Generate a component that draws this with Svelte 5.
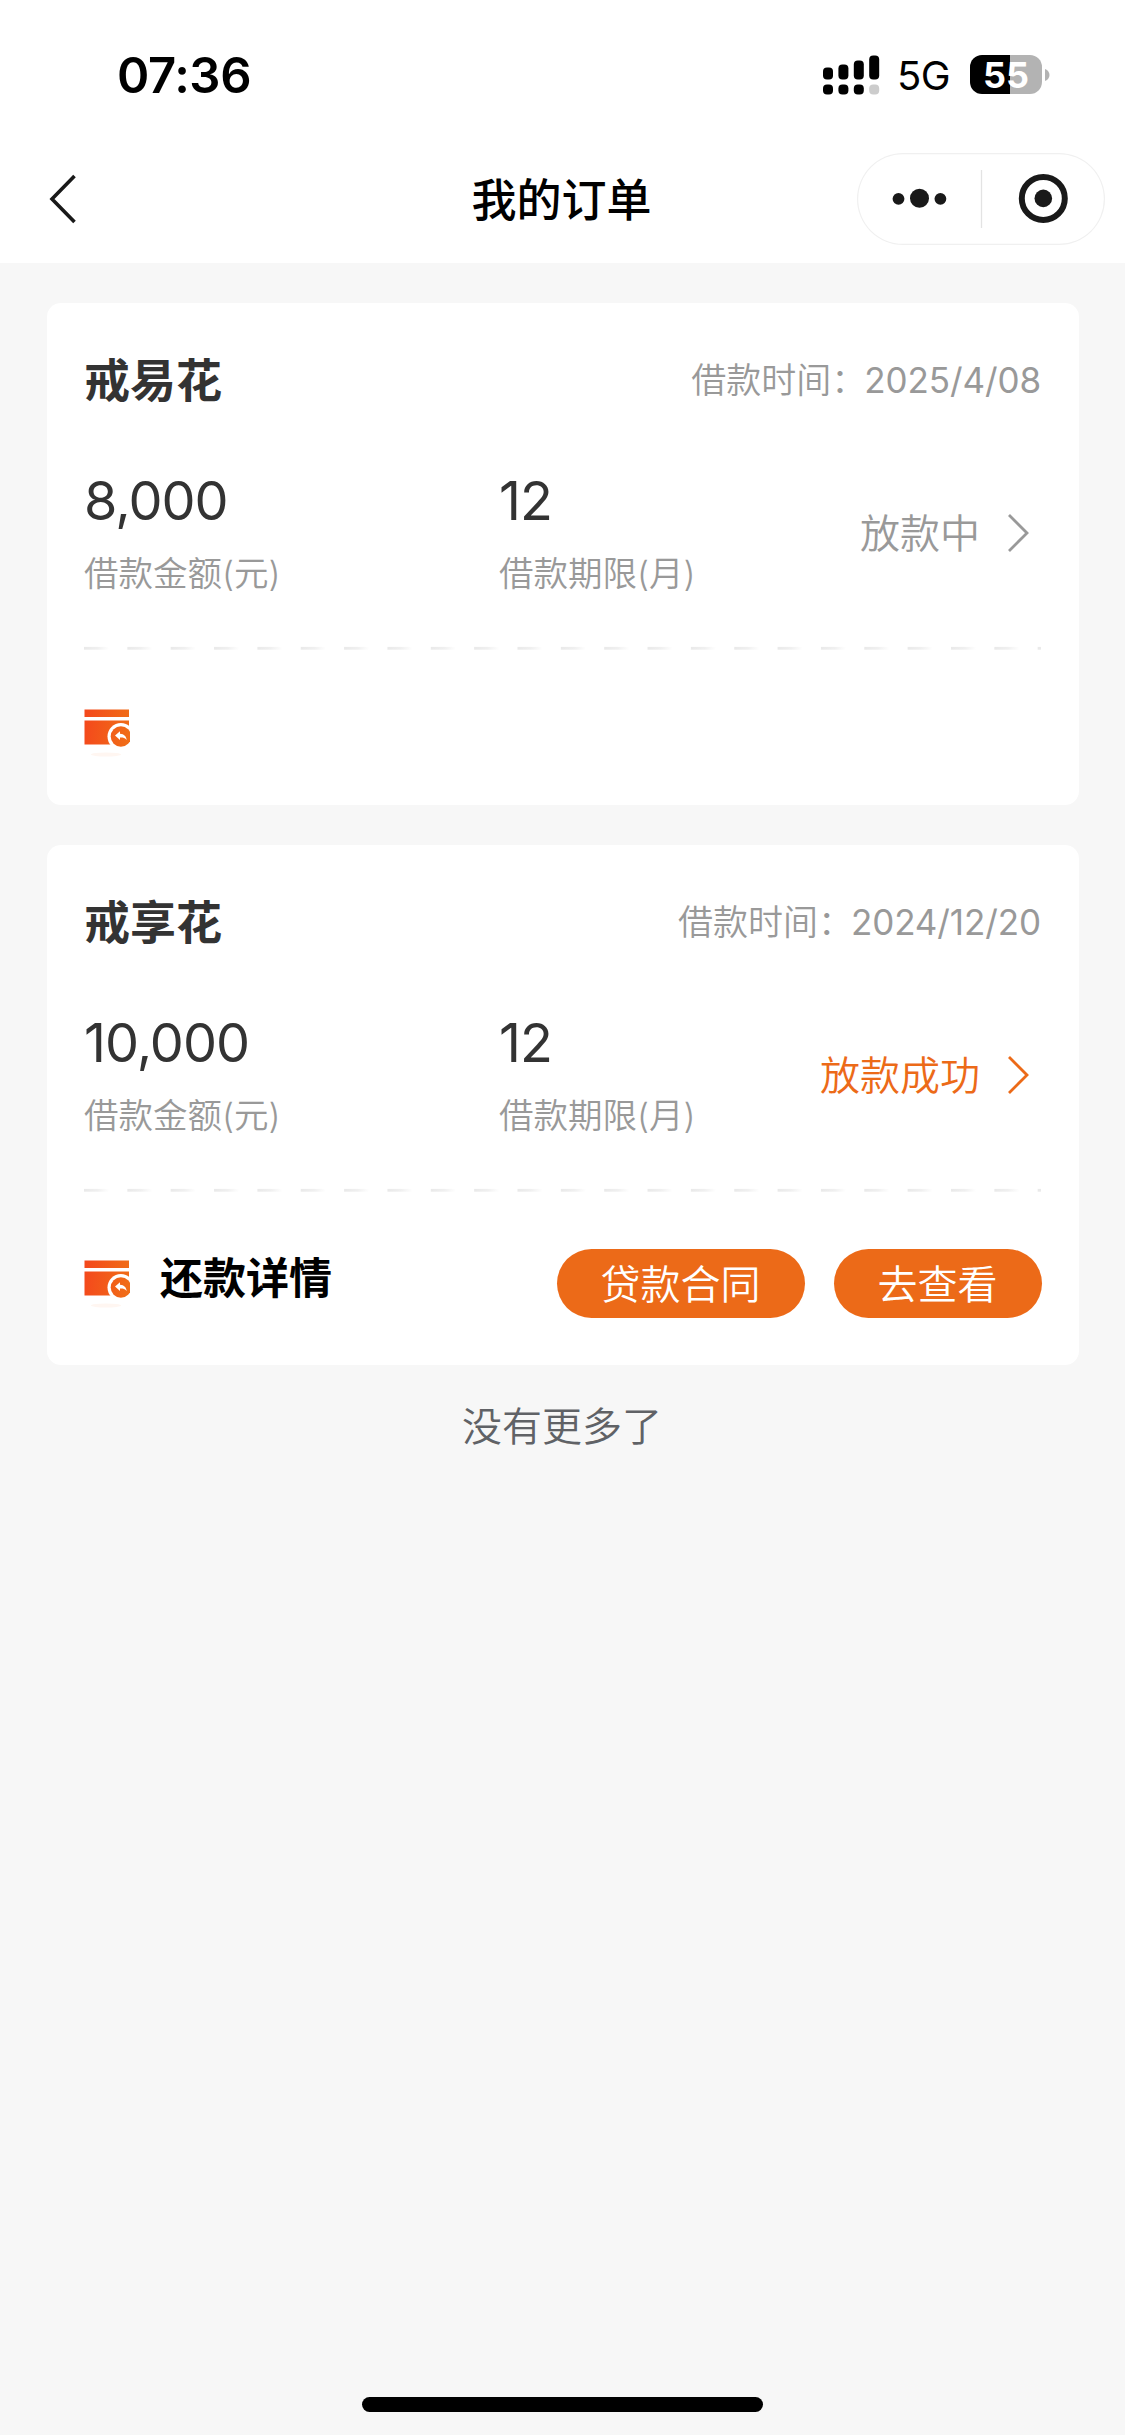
<script lang="ts">
  interface Order {
    id: number;
    product: string;
    date: string;
    amount: string;
    term: string;
    status: string;
    done: boolean;
  }

  const orders: Order[] = [
    { id: 1, product: '戒易花', date: '2025/4/08', amount: '8,000', term: '12', status: '放款中', done: false },
    { id: 2, product: '戒享花', date: '2024/12/20', amount: '10,000', term: '12', status: '放款成功', done: true },
  ];

  const signal = [12, 15, 19, 24];
</script>

<div class="page">
  <header class="header">
    <div class="status-bar">
      <span class="time">07:36</span>
      <div class="status-icons">
        <svg class="signal" width="57" height="40" viewBox="0 0 57 40" aria-hidden="true">
          {#each signal as h, i}
            <rect x={i * 15.4} y={24.5 - h} width="10" height={h} rx="4" />
            <rect x={i * 15.4} y="29.5" width="10" height="10" rx="4" fill={i === 3 ? '#ccc' : '#000'} />
          {/each}
        </svg>
        <span class="network">5G</span>
        <div class="battery"><span>55</span></div>
        <svg width="5" height="12" viewBox="0 0 5 12" aria-hidden="true">
          <path d="M0 0C6 2 6 10 0 12Z" fill="#b3b3b3" />
        </svg>
      </div>
    </div>

    <nav class="nav">
      <button class="back" type="button" aria-label="返回">
        <svg width="30" height="52" viewBox="0 0 30 52" fill="none" stroke="#191919" stroke-width="3.6">
          <path d="M26.5 3L4 26L26.5 49" />
        </svg>
      </button>
      <h1>我的订单</h1>
      <div class="capsule">
        <svg width="248" height="92" viewBox="0 0 248 92" fill="#191919" aria-hidden="true">
          <circle cx="41.5" cy="45.8" r="5.9" />
          <circle cx="62.5" cy="45.3" r="9.5" />
          <circle cx="83.4" cy="45.8" r="5.9" />
          <path d="M124.5 17V75" stroke="#e3e3e3" stroke-width="1.3" />
          <circle cx="186.3" cy="45.4" r="21.5" fill="none" stroke="#191919" stroke-width="6" />
          <circle cx="186.3" cy="45.4" r="8.8" />
        </svg>
      </div>
    </nav>
  </header>

  <main class="list">
    {#each orders as order (order.id)}
      <section class="card" class:card--done={order.done}>
        <div class="card__head">
          <h2>{order.product}</h2>
          <p>借款时间：<span class="date">{order.date}</span></p>
        </div>

        <div class="card__body">
          <div class="field">
            <strong>{order.amount}</strong>
            <span>借款金额(元)</span>
          </div>
          <div class="field">
            <strong>{order.term}</strong>
            <span>借款期限(月)</span>
          </div>
          <div class="state">
            <span>{order.status}</span>
            <svg width="24" height="42" viewBox="0 0 24 42" fill="none" stroke="currentColor" stroke-width="2.8">
              <path d="M2 3L20 21L2 39" />
            </svg>
          </div>
        </div>

        <svg class="divider" width="957" height="4" viewBox="0 0 957 4" aria-hidden="true">
          <defs>
            <linearGradient id="dash-{order.id}">
              <stop offset="0" stop-color="#e9e9e9" />
              <stop offset=".55" stop-color="#f0f0f0" />
              <stop offset="1" stop-color="#fff" />
            </linearGradient>
          </defs>
          {#each { length: 23 } as _, i}
            <rect x={i * 43.35} y=".9" width="25" height="2.8" fill="url(#dash-{order.id})" />
          {/each}
        </svg>

        <div class="card__foot">
          <svg class="bill" width="46" height="52" viewBox="0 0 46 52" aria-hidden="true">
            <defs>
              <linearGradient id="bill-{order.id}" gradientUnits="userSpaceOnUse" x1="0" y1="10" x2="46" y2="14">
                <stop offset="0" stop-color="#f4481c" />
                <stop offset="1" stop-color="#f06d17" />
              </linearGradient>
            </defs>
            <path d="M.5 .5H45V8H.5Z M.5 11.5H45V35.5H.5Z" fill="url(#bill-{order.id})" />
            <circle cx="36.9" cy="27.5" r="13.4" fill="#fff" />
            <circle cx="36.9" cy="27.5" r="10.2" fill="url(#bill-{order.id})" />
            <path d="M31 26.5L36 22.3V24.7C40.2 24.9 42.4 27.5 42.7 31.1C41 28.9 39 28.4 36 28.5V31Z" fill="#fff" />
            <ellipse cx="22" cy="45.5" rx="15" ry="2" fill="#fff6f1" />
          </svg>
          {#if order.done}
            <span class="detail">还款详情</span>
            <div class="actions">
              <button type="button">贷款合同</button>
              <button type="button">去查看</button>
            </div>
          {/if}
        </div>
      </section>
    {/each}
    <p class="end">没有更多了</p>
  </main>

  <div class="home-bar"></div>
</div>

<style>
  :global(body) {
    background: #f7f7f7;
  }

  .page {
    display: flex;
    flex-direction: column;
    box-sizing: border-box;
    width: 1125px;
    height: 2435px;
    padding-bottom: 23px;
    overflow: hidden;
    background: #f7f7f7;
    font-family: Inter, 'Noto Sans CJK SC', sans-serif;
  }

  h1,
  h2,
  p {
    margin: 0;
  }

  button {
    padding: 0;
    border: none;
    background: none;
    font-family: inherit;
  }

  svg {
    display: block;
    flex: none;
  }

  .header {
    height: 263px;
    background: #fff;
  }

  .status-bar {
    display: flex;
    align-items: center;
    justify-content: space-between;
    height: 149px;
    padding: 0 75px 0 117px;
  }

  .time {
    padding-top: 1px;
    font-size: 49px;
    font-weight: 600;
    letter-spacing: -0.4px;
  }

  .status-icons {
    display: flex;
    align-items: center;
  }

  .network {
    margin-left: 17px;
    padding-top: 2px;
    width: 54px;
    font-size: 40px;
    letter-spacing: -0.6px;
  }

  .battery {
    width: 72px;
    height: 39px;
    margin: 0 3px 0 19px;
    border-radius: 12px;
    background: linear-gradient(90deg, #000 55.5%, #b3b3b3 55.5%);
    color: #fff;
    font-size: 36px;
    font-weight: 700;
    line-height: 40px;
    text-align: center;
  }

  .nav {
    display: grid;
    grid-template-columns: 300px 1fr 300px;
    align-items: center;
    height: 100px;
  }

  .back {
    width: 30px;
    margin-left: 48px;
  }

  h1 {
    padding: 3px 2px 0 0;
    font-size: 45px;
    font-weight: 500;
    line-height: 60px;
    text-align: center;
  }

  .capsule {
    box-sizing: border-box;
    width: 248px;
    height: 92px;
    margin-left: 32px;
    border-radius: 46px;
    box-shadow: inset 0 0 0 1.2px #f0f0f0;
  }

  .list {
    display: flex;
    flex: 1;
    flex-direction: column;
    gap: 40px;
    padding: 40px 46px 0 47px;
  }

  .card {
    box-sizing: border-box;
    height: 502px;
    padding: 0 38px 0 37px;
    border-radius: 14px;
    background: #fff;
  }

  .card--done {
    height: 520px;
  }

  .card__head {
    display: flex;
    align-items: center;
    justify-content: space-between;
    box-sizing: border-box;
    height: 154px;
    padding-bottom: 6px;
  }

  h2 {
    color: #333;
    font-size: 46px;
    font-weight: 700;
  }

  .card__head p {
    color: #999;
    font-size: 35px;
    font-weight: 350;
  }

  .date {
    margin-left: -2px;
    font-weight: 400;
    letter-spacing: -0.1px;
  }

  .card__body {
    display: grid;
    grid-template-columns: 415px 230px 1fr;
    height: 189px;
  }

  .field {
    display: flex;
    flex-direction: column;
  }

  .field strong {
    height: 89px;
    color: #333;
    font-size: 54px;
    font-weight: 400;
    letter-spacing: -1px;
    line-height: 87px;
  }

  .field span {
    color: #999;
    font-size: 34.5px;
    font-weight: 350;
    line-height: 56px;
  }

  .state {
    display: flex;
    align-items: center;
    justify-content: flex-end;
    gap: 27px;
    height: 152px;
    padding-right: 10px;
    color: #999;
    font-size: 40px;
    font-weight: 350;
  }

  .state span {
    padding-bottom: 4px;
  }

  .card--done .state {
    color: #ec6a18;
  }

  .card__foot {
    display: flex;
    align-items: flex-start;
    padding-top: 59px;
  }

  .card--done .bill {
    margin-top: 9px;
  }

  .detail {
    margin: 2px 0 0 30px;
    font-size: 43px;
    font-weight: 700;
    line-height: 50px;
  }

  .actions {
    display: flex;
    gap: 29px;
    margin: -2px -0.5px 0 auto;
  }

  .actions button {
    height: 69px;
    padding: 2px 44px 0;
    border-radius: 35px;
    background: #ec6a18;
    color: #fff;
    font-size: 40px;
    font-weight: 350;
    line-height: 67px;
  }

  .end {
    padding: 2px 2px 0 0;
    color: #606266;
    font-size: 40px;
    font-weight: 350;
    line-height: 40px;
    text-align: center;
  }

  .home-bar {
    align-self: center;
    width: 401px;
    height: 15px;
    border-radius: 8px;
    background: #000;
  }
</style>
